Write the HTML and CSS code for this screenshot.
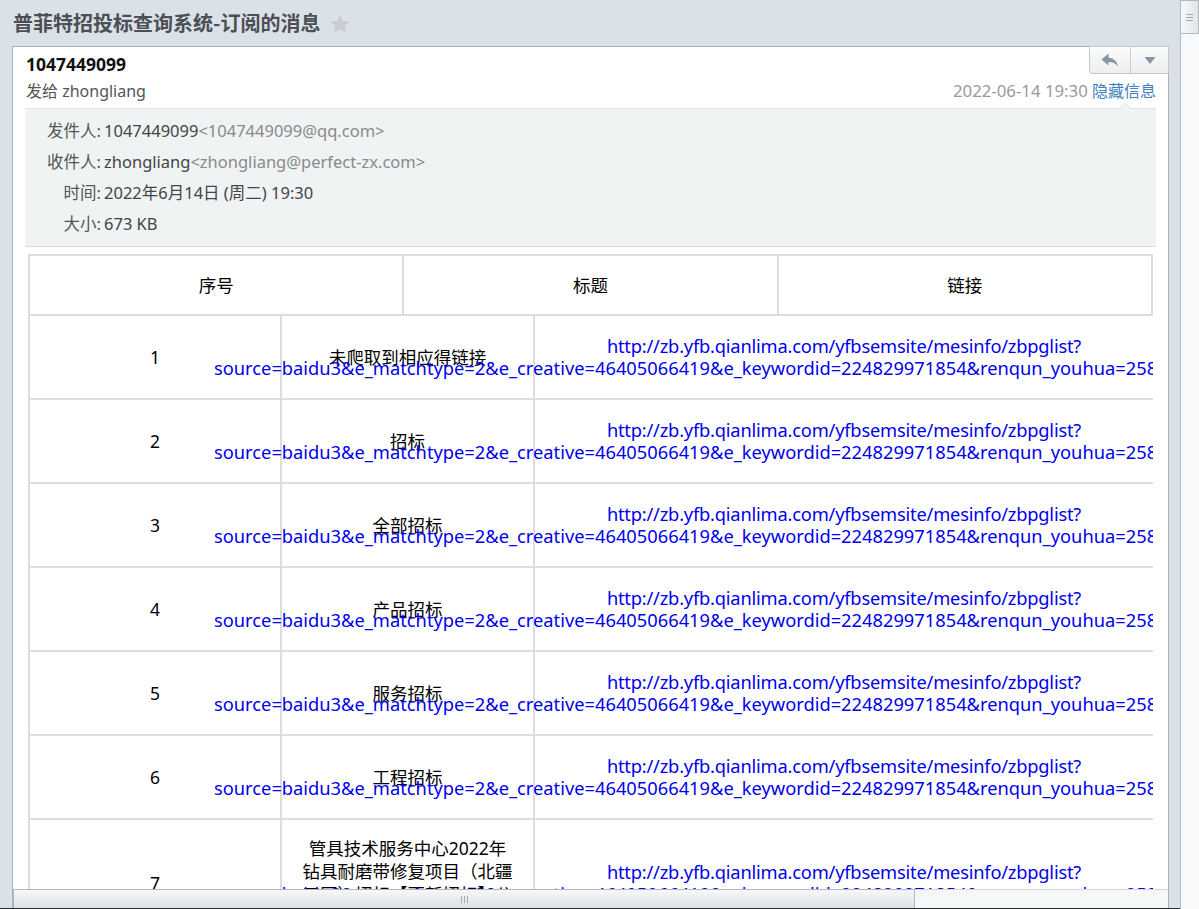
FILE: index.html
```html
<!DOCTYPE html>
<html lang="zh-CN">
<head>
<meta charset="utf-8">
<title>普菲特招投标查询系统-订阅的消息</title>
<link rel="stylesheet" href="styles.css">
</head>
<body>
<div class="app">
  <div class="titlebar">
    <span class="title">普菲特招投标查询系统-订阅的消息</span>
    <svg class="star" width="22" height="22" viewBox="0 0 24 24"><path d="M12 1.8l3.1 6.6 7.2.9-5.3 5 1.4 7.1L12 17.9l-6.4 3.5 1.4-7.1-5.3-5 7.2-.9z" fill="#c7cdd3"/></svg>
  </div>
  <div class="panel-wrap">
    <div class="panel">
      <div class="toolbtns">
        <div class="tbtn reply"><svg width="20" height="16" viewBox="0 0 20 16"><path d="M8.5 1.5L1.5 7.5l7 6V10c4.2 0 7.2 1.2 9.5 4.5C17.2 9.6 14.3 6.3 8.5 5.5z" fill="#8896a2"/></svg></div>
        <div class="tbtn more"><svg width="12" height="9" viewBox="0 0 12 9"><path d="M0.5 1h11L6 8z" fill="#8896a2"/></svg></div>
      </div>
      <div class="panel-body">
        <div class="mailhead">
          <div class="from">1047449099</div>
          <div class="toline">
            <span class="to">发给 zhongliang</span>
            <span class="meta"><span class="date">2022-06-14 19:30</span> <a class="hide">隐藏信息</a></span>
          </div>
        </div>
        <div class="details">
          <div class="drow"><span class="lbl">发件人:</span><span class="val">1047449099</span><span class="addr">&lt;1047449099@qq.com&gt;</span></div>
          <div class="drow"><span class="lbl">收件人:</span><span class="val">zhongliang</span><span class="addr">&lt;zhongliang@perfect-zx.com&gt;</span></div>
          <div class="drow"><span class="lbl">时间:</span><span class="val">2022年6月14日 (周二) 19:30</span></div>
          <div class="drow"><span class="lbl">大小:</span><span class="val">673 KB</span></div>
        </div>
        <div class="content">
          <table class="thead">
            <tr><td>序号</td><td>标题</td><td>链接</td></tr>
          </table>
          <table class="tbody">
            <colgroup><col class="c1"><col class="c2"><col class="c3"></colgroup>
            <tr><td>1</td><td>未爬取到相应得链接</td><td class="lk"><a><span class="l1">http://zb.yfb.qianlima.com/yfbsemsite/mesinfo/zbpglist?</span><span class="l2">source=baidu3&amp;e_matchtype=2&amp;e_creative=46405066419&amp;e_keywordid=224829971854&amp;renqun_youhua=2586547&amp;bd_vid=</span></a></td></tr>
            <tr><td>2</td><td>招标</td><td class="lk"><a><span class="l1">http://zb.yfb.qianlima.com/yfbsemsite/mesinfo/zbpglist?</span><span class="l2">source=baidu3&amp;e_matchtype=2&amp;e_creative=46405066419&amp;e_keywordid=224829971854&amp;renqun_youhua=2586547&amp;bd_vid=</span></a></td></tr>
            <tr><td>3</td><td>全部招标</td><td class="lk"><a><span class="l1">http://zb.yfb.qianlima.com/yfbsemsite/mesinfo/zbpglist?</span><span class="l2">source=baidu3&amp;e_matchtype=2&amp;e_creative=46405066419&amp;e_keywordid=224829971854&amp;renqun_youhua=2586547&amp;bd_vid=</span></a></td></tr>
            <tr><td>4</td><td>产品招标</td><td class="lk"><a><span class="l1">http://zb.yfb.qianlima.com/yfbsemsite/mesinfo/zbpglist?</span><span class="l2">source=baidu3&amp;e_matchtype=2&amp;e_creative=46405066419&amp;e_keywordid=224829971854&amp;renqun_youhua=2586547&amp;bd_vid=</span></a></td></tr>
            <tr><td>5</td><td>服务招标</td><td class="lk"><a><span class="l1">http://zb.yfb.qianlima.com/yfbsemsite/mesinfo/zbpglist?</span><span class="l2">source=baidu3&amp;e_matchtype=2&amp;e_creative=46405066419&amp;e_keywordid=224829971854&amp;renqun_youhua=2586547&amp;bd_vid=</span></a></td></tr>
            <tr><td>6</td><td>工程招标</td><td class="lk"><a><span class="l1">http://zb.yfb.qianlima.com/yfbsemsite/mesinfo/zbpglist?</span><span class="l2">source=baidu3&amp;e_matchtype=2&amp;e_creative=46405066419&amp;e_keywordid=224829971854&amp;renqun_youhua=2586547&amp;bd_vid=</span></a></td></tr>
            <tr class="tall"><td>7</td><td>管具技术服务中心2022年钻具耐磨带修复项目（北疆工区）招标【更新招标】公告</td><td class="lk"><a><span class="l1">http://zb.yfb.qianlima.com/yfbsemsite/mesinfo/zbpglist?</span><span class="l2">source=baidu3&amp;e_matchtype=2&amp;e_creative=46405066419&amp;e_keywordid=224829971854&amp;renqun_youhua=2586547&amp;bd_vid=</span></a></td></tr>
          </table>
        </div>
      </div>
      <div class="hscroll">
        <div class="hthumb"><span class="grip"><i></i><i></i><i></i></span></div>
        <div class="htrack"></div>
      </div>
    </div>
  </div>
  <div class="darkline"></div>
</div>
<div class="vscroll">
  <div class="vthumb"><span class="vgrip"><i></i><i></i><i></i></span></div>
</div>
</body>
</html>
```
FILE: styles.css
```css
html, body { margin: 0; padding: 0; }
body {
  background: #dae1e8;
  height: 909px;
  overflow: hidden;
  display: flex;
  font-family: "Noto Sans", "Noto Sans CJK SC", sans-serif;
  color: #333;
}
.app {
  flex: 1;
  display: flex;
  flex-direction: column;
  min-width: 0;
}
.titlebar {
  height: 46px;
  display: flex;
  align-items: center;
  padding-left: 13px;
  gap: 9px;
}
.title {
  font-family: "Noto Sans CJK SC", sans-serif;
  font-size: 20px;
  font-weight: bold;
  color: #4b4f53;
  line-height: 1;
}
.star { display: block; margin-top: 1px; }
.panel-wrap {
  flex: 1;
  padding: 0 11px 0 12px;
  min-height: 0;
  display: flex;
}
.panel {
  flex: 1;
  background: #fff;
  border: 1px solid #a9b0b7;
  border-bottom: none;
  display: flex;
  flex-direction: column;
  position: relative;
  min-height: 0;
}
.toolbtns {
  position: absolute;
  top: -1px;
  right: -1px;
  display: flex;
  height: 26px;
  border: 1px solid #c3c8cd;
  border-radius: 0 0 0 3px;
  background: linear-gradient(#fbfcfc, #eceef0);
  z-index: 2;
}
.tbtn {
  display: flex;
  align-items: center;
  justify-content: center;
}
.tbtn.reply { width: 40px; border-right: 1px solid #c9cdd1; }
.tbtn.more { width: 37px; }
.panel-body {
  flex: 1;
  min-height: 0;
  overflow: hidden;
}
.mailhead {
  padding: 5px 12px 0 13px;
}
.from {
  font-size: 17.5px;
  font-weight: bold;
  color: #111;
  line-height: 24px;
}
.toline {
  display: flex;
  justify-content: space-between;
  align-items: center;
  margin-top: 2px;
  line-height: 24px;
  font-size: 16px;
}
.to { color: #555; }
.date { color: #999a9c; font-size: 16.8px; }
.hide { color: #3f7fbf; font-family: "Noto Sans CJK SC", sans-serif; font-size: 16px; }
.details {
  position: relative;
  margin: 5px 12px 0 12px;
  background: #f0f3f3;
  border-top: 1px solid #e1e5e6;
  border-bottom: 1px solid #dbdee0;
  padding: 6px 0 7px;
  font-size: 16.5px;
}
.details::before {
  content: "";
  position: absolute;
  top: -7px;
  right: 24px;
  border: 7px solid transparent;
  border-top: none;
  border-bottom-color: #e1e5e6;
}
.details::after {
  content: "";
  position: absolute;
  top: -6px;
  right: 25px;
  border: 6px solid transparent;
  border-top: none;
  border-bottom-color: #f0f3f3;
}
.drow {
  display: flex;
  line-height: 31px;
  white-space: nowrap;
}
.lbl {
  width: 76px;
  text-align: right;
  color: #555;
  padding-right: 3px;
  flex-shrink: 0;
}
.val { color: #444; }
.addr { color: #8a8a8a; }
.content {
  margin: 7px 0 0 15px;
  width: 1125px;
  overflow: hidden;
  font-family: "Noto Sans", "Noto Sans CJK SC", sans-serif;
  color: #000;
}
table {
  border-collapse: separate;
  border-spacing: 0;
  width: 1125px;
  table-layout: fixed;
  border-left: 2px solid #dcdcdc;
}
td {
  border-right: 2px solid #dcdcdc;
  border-bottom: 2px solid #dcdcdc;
  text-align: center;
  vertical-align: middle;
  font-size: 17.5px;
  line-height: 23px;
  padding: 0 15px;
}
.thead { border-top: 2px solid #dcdcdc; }
.thead td { height: 58px; padding: 0; }
.tbody col.c1 { width: 252px; }
.tbody col.c2 { width: 253px; }
.tbody col.c3 { width: 620px; }
.tbody td { padding: 0 19px; box-sizing: border-box; height: 84px; }
.tbody tr.tall td { padding: 17px 19px; height: auto; }
.lk a { color: #0000ee; text-decoration: none; font-size: 18.3px; line-height: 22.5px; }
.l1 { display: block; letter-spacing: -0.2px; }
.l2 {
  display: block;
  white-space: nowrap;
  text-align: left;
  margin-left: -340px;
}
.hscroll {
  height: 19px;
  display: flex;
  flex-shrink: 0;
}
.hthumb {
  width: 902px;
  box-sizing: border-box;
  border: 1px solid #b3b8bd;
  border-bottom: none;
  background: linear-gradient(#f7f8f9, #dde0e4);
  display: flex;
  align-items: center;
  justify-content: center;
}
.grip, .vgrip { display: flex; gap: 2px; }
.grip i { display: block; width: 1px; height: 7px; background: #a4abb2; }
.htrack {
  flex: 1;
  background: #f6f7f8;
  border-top: 1px solid #d3d7db;
}
.darkline { height: 1px; background: #26312f; }
.vscroll {
  width: 18px;
  border-left: 1px solid #b3b9bf;
  background: #f8f9fa;
}
.vthumb {
  height: 34px;
  box-sizing: border-box;
  border: 1px solid #b3b8bd;
  border-left: none;
  background: linear-gradient(90deg, #f7f8f9, #e2e5e8);
  display: flex;
  align-items: center;
  justify-content: center;
}
.vgrip { flex-direction: column; }
.vgrip i { display: block; width: 7px; height: 1px; background: #a4abb2; }
```
